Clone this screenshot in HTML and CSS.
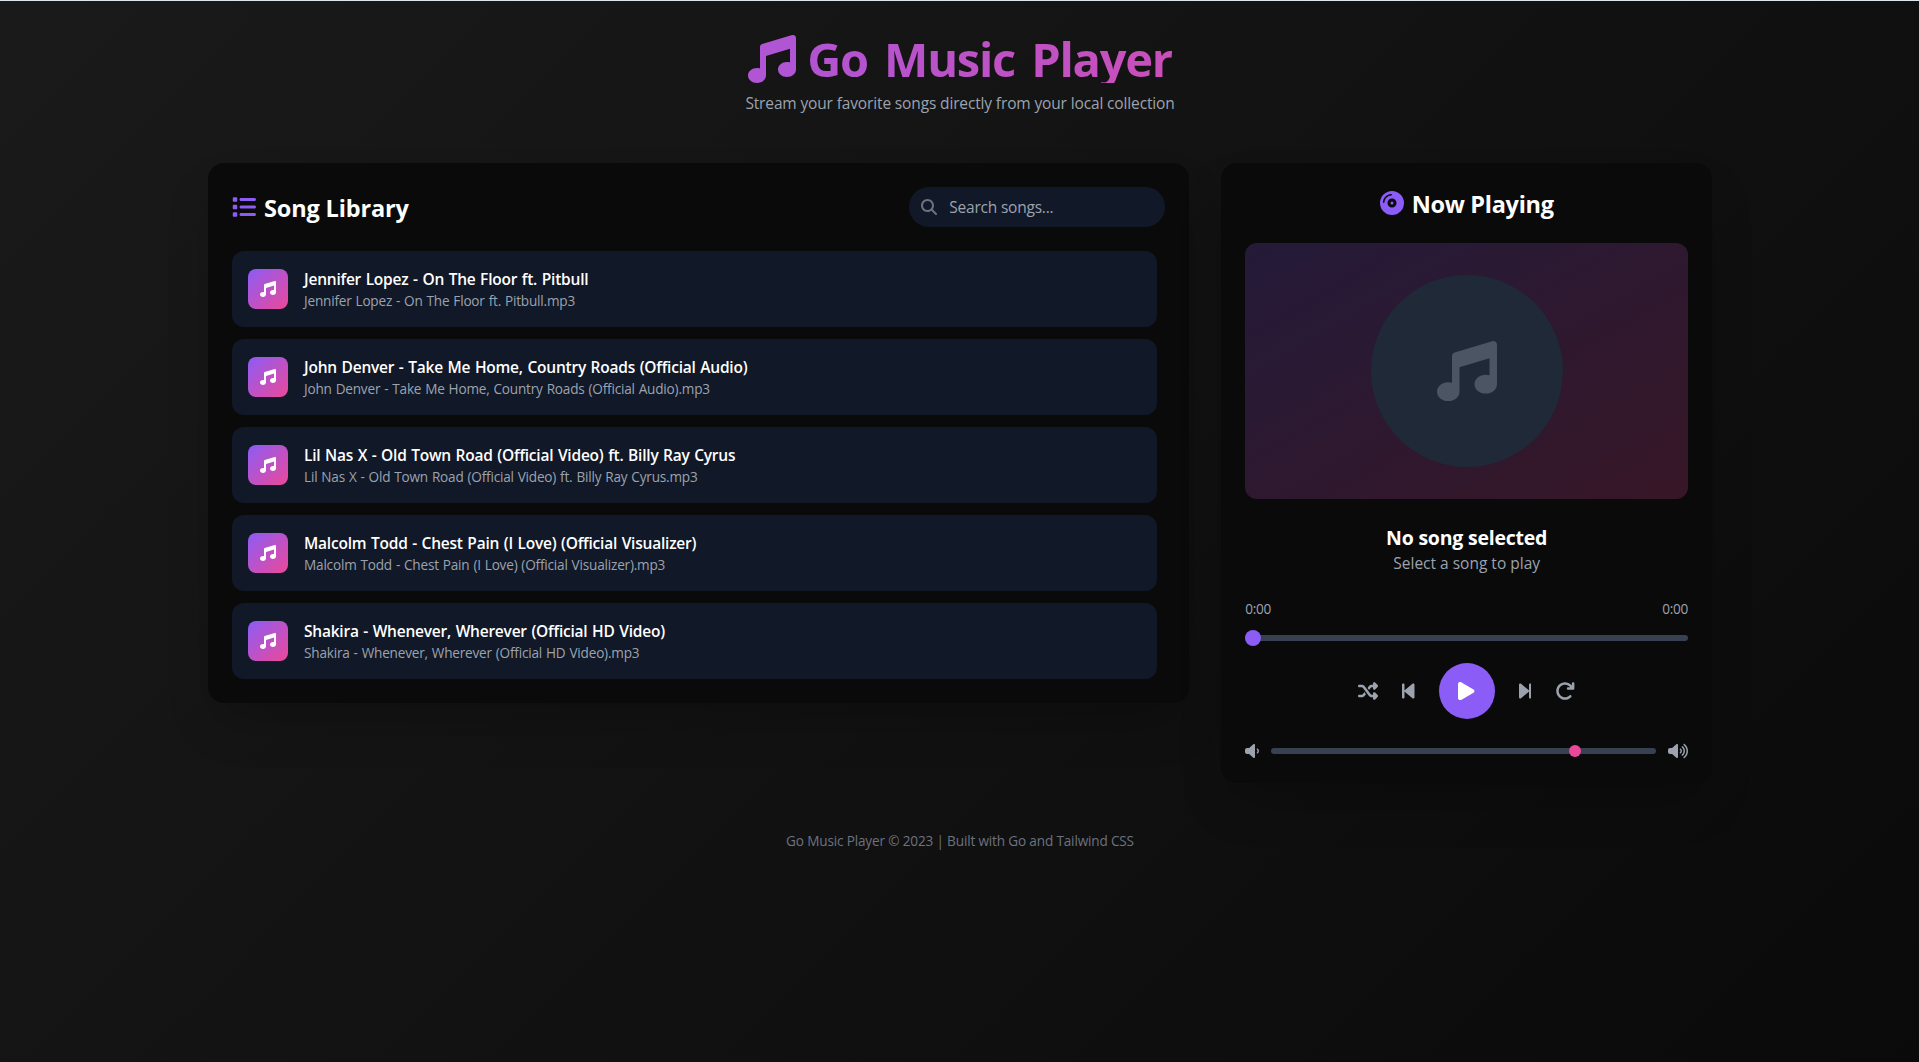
FILE: index.html
```html
<!DOCTYPE html>
<html lang="en">
<head>
<meta charset="utf-8">
<title>Go Music Player</title>
<link rel="stylesheet" href="styles.css">
</head>
<body>
<svg class="sprite" aria-hidden="true">
  <symbol id="music" viewBox="0 0 512 512"><path d="M499.1 6.3c8.1 6 12.9 15.6 12.9 25.7v72V368c0 44.2-43 80-96 80s-96-35.8-96-80s43-80 96-80c11.2 0 22 1.6 32 4.6V147L192 223.8V432c0 44.2-43 80-96 80s-96-35.8-96-80s43-80 96-80c11.2 0 22 1.6 32 4.6V200 128c0-14.1 9.3-26.6 22.8-30.7l320-96c9.7-2.9 20.2-1.1 28.3 5z"/></symbol>
</svg>
<div class="container">
  <header class="page-header">
    <h1 class="title">
      <svg class="title-icon"><use href="#music"/></svg>
      <span>Go Music Player</span>
    </h1>
    <p class="tagline">Stream your favorite songs directly from your local collection</p>
  </header>

  <main class="layout">
    <section class="panel">
      <div class="library-head">
        <h2 class="heading">
          <svg class="heading-icon list-icon" viewBox="0 0 512 512"><path d="M40 48C26.7 48 16 58.7 16 72v48c0 13.3 10.7 24 24 24H88c13.3 0 24-10.7 24-24V72c0-13.3-10.7-24-24-24H40zM192 64c-17.7 0-32 14.3-32 32s14.3 32 32 32H480c17.7 0 32-14.3 32-32s-14.3-32-32-32H192zm0 160c-17.7 0-32 14.3-32 32s14.3 32 32 32H480c17.7 0 32-14.3 32-32s-14.3-32-32-32H192zm0 160c-17.7 0-32 14.3-32 32s14.3 32 32 32H480c17.7 0 32-14.3 32-32s-14.3-32-32-32H192zM16 232v48c0 13.3 10.7 24 24 24H88c13.3 0 24-10.7 24-24V232c0-13.3-10.7-24-24-24H40c-13.3 0-24 10.7-24 24zM40 368c-13.3 0-24 10.7-24 24v48c0 13.3 10.7 24 24 24H88c13.3 0 24-10.7 24-24V392c0-13.3-10.7-24-24-24H40z"/></svg>
          <span class="heading-text">Song Library</span>
        </h2>
        <label class="search">
          <svg class="search-icon" viewBox="0 0 512 512"><path d="M416 208c0 45.9-14.9 88.3-40 122.7L502.6 457.4c12.5 12.5 12.5 32.8 0 45.3s-32.8 12.5-45.3 0L330.7 376c-34.4 25.2-76.8 40-122.7 40C93.1 416 0 322.9 0 208S93.1 0 208 0S416 93.1 416 208zM208 352a144 144 0 1 0 0-288 144 144 0 1 0 0 288z"/></svg>
          <input class="search-input" type="text" placeholder="Search songs...">
        </label>
      </div>
      <ul class="songs">
        <li class="song">
          <span class="song-badge"><svg class="song-icon"><use href="#music"/></svg></span>
          <div><h3 class="song-title">Jennifer Lopez - On The Floor ft. Pitbull</h3><p class="song-file">Jennifer Lopez - On The Floor ft. Pitbull.mp3</p></div>
        </li>
        <li class="song">
          <span class="song-badge"><svg class="song-icon"><use href="#music"/></svg></span>
          <div><h3 class="song-title">John Denver - Take Me Home, Country Roads (Official Audio)</h3><p class="song-file">John Denver - Take Me Home, Country Roads (Official Audio).mp3</p></div>
        </li>
        <li class="song">
          <span class="song-badge"><svg class="song-icon"><use href="#music"/></svg></span>
          <div><h3 class="song-title">Lil Nas X - Old Town Road (Official Video) ft. Billy Ray Cyrus</h3><p class="song-file">Lil Nas X - Old Town Road (Official Video) ft. Billy Ray Cyrus.mp3</p></div>
        </li>
        <li class="song">
          <span class="song-badge"><svg class="song-icon"><use href="#music"/></svg></span>
          <div><h3 class="song-title">Malcolm Todd - Chest Pain (I Love) (Official Visualizer)</h3><p class="song-file">Malcolm Todd - Chest Pain (I Love) (Official Visualizer).mp3</p></div>
        </li>
        <li class="song">
          <span class="song-badge"><svg class="song-icon"><use href="#music"/></svg></span>
          <div><h3 class="song-title">Shakira - Whenever, Wherever (Official HD Video)</h3><p class="song-file">Shakira - Whenever, Wherever (Official HD Video).mp3</p></div>
        </li>
      </ul>
    </section>

    <section class="panel">
      <h2 class="heading now-heading">
        <svg class="heading-icon" viewBox="0 0 512 512"><path fill-rule="evenodd" d="M0 256a256 256 0 1 1 512 0A256 256 0 1 1 0 256zm256 32a32 32 0 1 1 0-64 32 32 0 1 1 0 64zm-96-32a96 96 0 1 0 192 0 96 96 0 1 0 -192 0zM96 240c0-35 17.5-71.1 45.2-98.8S205 96 240 96c8.8 0 16-7.2 16-16s-7.2-16-16-16c-45.4 0-89.2 22.3-121.5 54.5S64 194.6 64 240c0 8.8 7.2 16 16 16s16-7.2 16-16z"/></svg>
        <span class="heading-text">Now Playing</span>
      </h2>
      <div class="album">
        <div class="album-disc"><svg class="album-icon"><use href="#music"/></svg></div>
      </div>
      <div class="track">
        <h3 class="track-title">No song selected</h3>
        <p class="track-artist">Select a song to play</p>
      </div>
      <div class="times"><span>0:00</span><span>0:00</span></div>
      <input class="slider progress" type="range" min="0" max="100" value="0" aria-label="Progress">
      <div class="controls">
        <svg class="ctl" viewBox="0 0 512 512"><path d="M403.8 34.4c12-5 25.7-2.2 34.9 6.9l64 64c6 6 9.4 14.1 9.4 22.6s-3.4 16.6-9.4 22.6l-64 64c-9.2 9.2-22.9 11.9-34.9 6.9s-19.8-16.6-19.8-29.6V160H352c-10.1 0-19.6 4.7-25.6 12.8L284 229.3 244 176l31.2-41.6C293.3 110.2 321.8 96 352 96h32V64c0-12.9 7.8-24.6 19.8-29.6zM164 282.7L204 336l-31.2 41.6C154.7 401.8 126.2 416 96 416H32c-17.7 0-32-14.3-32-32s14.3-32 32-32H96c10.1 0 19.6-4.7 25.6-12.8L164 282.7zm274.6 188c-9.2 9.2-22.9 11.9-34.9 6.9s-19.8-16.6-19.8-29.6V416H352c-30.2 0-58.7-14.2-76.8-38.4L121.6 172.8c-6-8.1-15.5-12.8-25.6-12.8H32c-17.7 0-32-14.3-32-32s14.3-32 32-32H96c30.2 0 58.7 14.2 76.8 38.4L326.4 339.2c6 8.1 15.5 12.8 25.6 12.8h32V320c0-12.9 7.8-24.6 19.8-29.6s25.7-2.2 34.9 6.9l64 64c6 6 9.4 14.1 9.4 22.6s-3.4 16.6-9.4 22.6l-64 64z"/></svg>
        <svg class="ctl ctl-step" viewBox="0 0 320 512"><path d="M267.5 440.6c9.5 7.9 22.8 9.7 34.1 4.4s18.4-16.6 18.4-29V96c0-12.4-7.2-23.7-18.4-29s-24.5-3.6-34.1 4.4l-192 160L64 241V96c0-17.7-14.3-32-32-32S0 78.3 0 96V416c0 17.7 14.3 32 32 32s32-14.3 32-32V271l11.5 9.6 192 160z"/></svg>
        <button class="play" type="button" aria-label="Play"><svg class="play-icon" viewBox="0 32 384 448" preserveAspectRatio="none"><path d="M73 39c-14.8-9.1-33.4-9.4-48.5-.9S0 62.6 0 80V432c0 17.4 9.4 33.4 24.5 41.9s33.7 8.1 48.5-.9L361 297c14.3-8.7 23-24.2 23-41s-8.7-32.2-23-41L73 39z"/></svg></button>
        <svg class="ctl ctl-step" viewBox="0 0 320 512"><path d="M52.5 440.6c-9.5 7.9-22.8 9.7-34.1 4.4S0 428.4 0 416V96C0 83.6 7.2 72.3 18.4 67s24.5-3.6 34.1 4.4l192 160L256 241V96c0-17.7 14.3-32 32-32s32 14.3 32 32V416c0 17.7-14.3 32-32 32s-32-14.3-32-32V271l-11.5 9.6-192 160z"/></svg>
        <svg class="ctl" viewBox="0 0 512 512"><path d="M386.3 160H336c-17.7 0-32 14.3-32 32s14.3 32 32 32H464c17.7 0 32-14.3 32-32V64c0-17.7-14.3-32-32-32s-32 14.3-32 32v51.2L414.4 97.6c-87.5-87.5-229.3-87.5-316.8 0s-87.5 229.3 0 316.8s229.3 87.5 316.8 0c12.5-12.5 12.5-32.8 0-45.3s-32.8-12.5-45.3 0c-62.5 62.5-163.8 62.5-226.3 0s-62.5-163.8 0-226.3s163.8-62.5 226.3 0L386.3 160z"/></svg>
      </div>
      <div class="volume">
        <svg class="vol vol-low" viewBox="0 0 448 512"><path d="M301.1 34.8C312.6 40 320 51.4 320 64V448c0 12.6-7.4 24-18.9 29.2s-25 3.1-34.4-5.3L131.8 352H64c-35.3 0-64-28.7-64-64V224c0-35.3 28.7-64 64-64h67.8L266.7 40.1c9.4-8.4 22.9-10.4 34.4-5.3zM412.6 181.5C434.1 199.1 448 225.9 448 256s-13.9 56.9-35.4 74.5c-10.3 8.4-25.4 6.8-33.8-3.5s-6.8-25.4 3.5-33.8C393.1 284.4 400 271 400 256s-6.9-28.4-17.7-37.3c-10.3-8.4-11.8-23.5-3.5-33.8s23.5-11.8 33.8-3.5z"/></svg>
        <input class="slider volume-slider" type="range" min="0" max="100" value="80" aria-label="Volume">
        <svg class="vol vol-high" viewBox="0 0 640 512"><path d="M533.6 32.5C598.5 85.2 640 165.8 640 256s-41.5 170.7-106.4 223.5c-10.3 8.4-25.4 6.8-33.8-3.5s-6.8-25.4 3.5-33.8C557.5 398.2 592 331.2 592 256s-34.5-142.2-88.7-186.3c-10.3-8.4-11.8-23.5-3.5-33.8s23.5-11.8 33.8-3.5zM473.1 107c43.2 35.2 70.9 88.9 70.9 149s-27.7 113.8-70.9 149c-10.3 8.4-25.4 6.8-33.8-3.5s-6.8-25.4 3.5-33.8C475.3 341.3 496 301.1 496 256s-20.7-85.3-53.2-111.8c-10.3-8.4-11.8-23.5-3.5-33.8s23.5-11.8 33.8-3.5zm-60.5 74.5C434.1 199.1 448 225.9 448 256s-13.9 56.9-35.4 74.5c-10.3 8.4-25.4 6.8-33.8-3.5s-6.8-25.4 3.5-33.8C393.1 284.4 400 271 400 256s-6.9-28.4-17.7-37.3c-10.3-8.4-11.8-23.5-3.5-33.8s23.5-11.8 33.8-3.5zM301.1 34.8C312.6 40 320 51.4 320 64V448c0 12.6-7.4 24-18.9 29.2s-25 3.1-34.4-5.3L131.8 352H64c-35.3 0-64-28.7-64-64V224c0-35.3 28.7-64 64-64h67.8L266.7 40.1c9.4-8.4 22.9-10.4 34.4-5.3z"/></svg>
      </div>
    </section>
  </main>

  <footer class="page-footer">Go Music Player © 2023 | Built with Go and Tailwind CSS</footer>
</div>
</body>
</html>
```
FILE: styles.css
```css
:root {
  --primary: #8b5cf6;
  --secondary: #ec4899;
  --dark: #0a0a0a;
}

* {
  box-sizing: border-box;
  margin: 0;
  padding: 0;
}

body {
  min-height: 100vh;
  padding-left: 1px;
  border-top: 1px solid #dfe5ee;
  background: linear-gradient(135deg, #1a1a1a 0%, var(--dark) 100%) border-box;
  color: #fff;
  font-family: "Open Sans", "Noto Sans", sans-serif;
}

.sprite { display: none; }

svg { display: block; fill: currentColor; flex: none; }

.container {
  width: 1536px;
  margin: 0 auto;
  padding: 32px 16px;
}

.page-header { text-align: center; margin-bottom: 48px; }

.title {
  display: flex;
  justify-content: center;
  height: 50px;
  margin-bottom: 8px;
  background: linear-gradient(to right, var(--primary), var(--secondary));
  -webkit-background-clip: text;
  background-clip: text;
  color: transparent;
  font-size: 47px;
  font-weight: 700;
  line-height: 53px;
  letter-spacing: -1.25px;
  word-spacing: 5.3px;
  gap: 11px;
}

.title-icon {
  width: 48px;
  height: 48px;
  margin-top: 2px;
  fill: #b055d4;
}

.tagline {
  color: #9ca3af;
  font-size: 15.5px;
  line-height: 24px;
  letter-spacing: -0.14px;
}

.layout {
  display: grid;
  grid-template-columns: 2fr 1fr;
  gap: 32px;
  align-items: start;
}

.panel {
  padding: 24px;
  border-radius: 16px;
  background: var(--dark);
  box-shadow: 0 25px 50px -12px rgba(0, 0, 0, 0.25);
}

.heading {
  display: flex;
  gap: 8px;
  font-size: 23.5px;
  font-weight: 700;
  line-height: 32px;
  letter-spacing: -0.15px;
}

.heading-icon {
  width: 24px;
  height: 24px;
  margin-top: 4px;
  color: var(--primary);
}

.library-head {
  display: flex;
  justify-content: space-between;
  align-items: center;
  height: 40px;
  margin-bottom: 24px;
}

.heading-text { height: 32px; padding-top: 1px; }

.search {
  display: flex;
  align-items: center;
  gap: 12px;
  width: 256px;
  height: 40px;
  padding: 0 12px;
  border-radius: 20px;
  background: #111827;
}

.search-icon { width: 16px; height: 16px; color: #6b7280; }

.search-input {
  flex: 1;
  min-width: 0;
  border: 0;
  outline: 0;
  background: none;
  color: #fff;
  font: 15.5px/24px "Open Sans", sans-serif;
  letter-spacing: -0.22px;
}

.search-input::placeholder { color: #9ca3af; opacity: 1; }

.songs {
  display: flex;
  flex-direction: column;
  gap: 12px;
  padding-right: 8px;
  list-style: none;
}

.song {
  display: flex;
  align-items: center;
  gap: 16px;
  padding: 16px;
  border-radius: 12px;
  background: #111827;
}

.song-badge {
  display: grid;
  place-items: center;
  width: 40px;
  height: 40px;
  border-radius: 8px;
  background: linear-gradient(to bottom right, var(--primary), var(--secondary));
}

.song-icon { width: 16px; height: 16px; }

.song-title {
  font-size: 15.5px;
  font-weight: 600;
  line-height: 24px;
  letter-spacing: -0.22px;
  word-spacing: 0.8px;
}

.song-file {
  color: #9ca3af;
  font-size: 13.6px;
  line-height: 20px;
  letter-spacing: -0.2px;
  word-spacing: 0.6px;
}

.now-heading {
  justify-content: center;
  margin-bottom: 24px;
  letter-spacing: -0.3px;
}

.album {
  display: grid;
  place-items: center;
  height: 256px;
  margin-bottom: 24px;
  border-radius: 12px;
  background: linear-gradient(to bottom right, rgba(139, 92, 246, 0.2), rgba(236, 72, 153, 0.2));
}

.album-disc {
  display: grid;
  place-items: center;
  width: 192px;
  height: 192px;
  border-radius: 50%;
  background: #1f2937;
}

.album-icon { width: 60px; height: 60px; color: #4b5563; }

.track { margin-bottom: 24px; text-align: center; }

.track-title {
  height: 28px;
  padding-top: 1px;
  font-size: 19.5px;
  font-weight: 700;
  line-height: 28px;
  letter-spacing: -0.22px;
}

.track-artist {
  color: #9ca3af;
  font-size: 15.5px;
  line-height: 24px;
}

.times {
  display: flex;
  justify-content: space-between;
  margin-bottom: 16px;
  color: #9ca3af;
  font-size: 13.6px;
  line-height: 20px;
  letter-spacing: -0.3px;
}

.slider {
  -webkit-appearance: none;
  appearance: none;
  display: block;
  height: 6px;
  border-radius: 3px;
  background: #374151;
}

.slider::-webkit-slider-thumb {
  -webkit-appearance: none;
  width: 16px;
  height: 16px;
  border-radius: 50%;
  background: var(--primary);
}

.progress { width: 100%; margin-bottom: 22px; }

.controls {
  display: flex;
  justify-content: center;
  align-items: center;
  gap: 24px;
  margin-bottom: 24px;
  color: #9ca3af;
}

.ctl { width: 20px; height: 20px; }
.ctl-step { width: 12.5px; }

.play {
  display: grid;
  place-items: center;
  width: 56px;
  height: 56px;
  border: 0;
  border-radius: 50%;
  background: var(--primary);
  color: #fff;
}

.play-icon { width: 16.5px; height: 18.2px; }

.volume {
  display: flex;
  align-items: center;
  gap: 12px;
  color: #9ca3af;
}

.vol { height: 16px; }
.vol-low { width: 14px; }
.vol-high { width: 20px; }

.volume-slider { flex: 1; min-width: 0; }

.volume-slider::-webkit-slider-thumb {
  width: 12px;
  height: 12px;
  background: var(--secondary);
}

.page-footer {
  margin-top: 48px;
  color: #6b7280;
  font-size: 13.6px;
  line-height: 20px;
  letter-spacing: -0.17px;
  text-align: center;
}
```
